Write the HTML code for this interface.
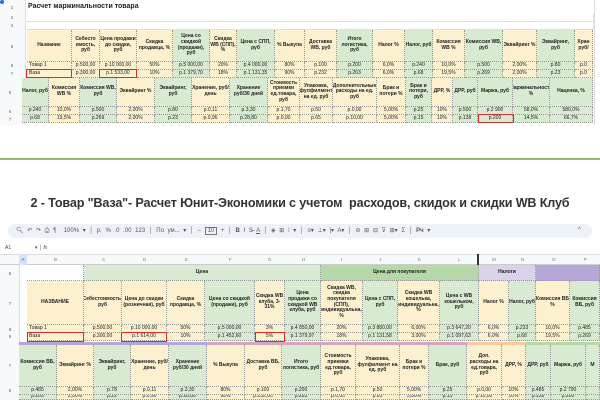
<!DOCTYPE html><html><head><meta charset="utf-8"><style>
body{margin:0;width:600px;height:400px;overflow:hidden;background:#fff;font-family:"Liberation Sans",Arial,sans-serif;position:relative}
.c{position:absolute;box-sizing:border-box;border-right:1px dotted #9a9a9a;border-bottom:1px dotted #9a9a9a;font-size:5px;line-height:5.6px;color:#222;display:flex;align-items:center;justify-content:center;text-align:center;overflow:hidden}
.h{font-weight:bold;font-size:5px}
.Y{background:#fdf0cf}.G{background:#d9ead3}.W{background:#fff}
.r{position:absolute;font-size:4.5px;color:#666;width:20px;text-align:center}
.rb{position:absolute;border:1.5px solid #d32f2f;box-sizing:border-box}
.t{position:absolute;white-space:nowrap}
.g{position:absolute;border-right:1px solid #e0e0e0;border-bottom:1px solid #e0e0e0;box-sizing:border-box}
</style></head><body>
<div style="position:absolute;left:0;top:0;width:594px;height:125px;background:#fff;border-right:1px solid #ddd"></div>
<div style="position:absolute;left:0;top:0;width:25px;height:125px;background:#f8f9fa;border-right:1px solid #ddd"></div>
<div style="position:absolute;left:0;top:0;width:4px;height:4px;border-radius:50%;background:#1a73e8"></div>
<div class="g" style="left:25px;top:13px;width:569px;height:9px"></div>
<div class="g" style="left:25px;top:22px;width:569px;height:8px"></div>
<div class="t" style="left:28px;top:3px;font-size:7px;font-weight:bold;color:#222">Расчет маржинальности товара</div>
<div class="r" style="left:2px;top:5px">2</div><div class="r" style="left:2px;top:15px">3</div><div class="r" style="left:2px;top:23px">4</div>
<div class="r" style="left:2px;top:44px">5</div><div class="r" style="left:2px;top:63px">6</div><div class="r" style="left:2px;top:71px">7</div>
<div class="r" style="left:0px;top:90px">8</div><div class="r" style="left:0px;top:109px">6</div><div class="r" style="left:0px;top:117px">7</div>

<div class="c h Y" style="left:27px;top:30px;width:45px;height:32px">Название</div>
<div class="c h Y" style="left:72px;top:30px;width:28px;height:32px">Себесто имость, руб</div>
<div class="c h Y" style="left:100px;top:30px;width:37px;height:32px">Цена продажи до скидки, руб</div>
<div class="c h Y" style="left:137px;top:30px;width:36px;height:32px">Скидка продавца, %</div>
<div class="c h G" style="left:173px;top:30px;width:37px;height:32px">Цена со скидкой (продажи), руб</div>
<div class="c h Y" style="left:210px;top:30px;width:27px;height:32px">Скидка WB (СПП), %</div>
<div class="c h G" style="left:237px;top:30px;width:38px;height:32px">Цена с СПП, руб</div>
<div class="c h Y" style="left:275px;top:30px;width:30px;height:32px">% Выкупа</div>
<div class="c h Y" style="left:305px;top:30px;width:32px;height:32px">Доставка WB, руб</div>
<div class="c h G" style="left:337px;top:30px;width:36px;height:32px">Итого логистика, руб</div>
<div class="c h Y" style="left:373px;top:30px;width:32px;height:32px">Налог %</div>
<div class="c h G" style="left:405px;top:30px;width:28px;height:32px">Налог, руб</div>
<div class="c h Y" style="left:433px;top:30px;width:32px;height:32px">Комиссия WB %</div>
<div class="c h G" style="left:465px;top:30px;width:38px;height:32px">Комиссия WB, руб</div>
<div class="c h Y" style="left:503px;top:30px;width:34px;height:32px">Эквайринг %</div>
<div class="c h G" style="left:537px;top:30px;width:38px;height:32px">Эквайринг, руб</div>
<div class="c h Y" style="left:575px;top:30px;width:18px;height:32px">Хран руб/</div>
<div class="c Y" style="left:27px;top:62px;width:45px;height:8px;justify-content:flex-start;padding-left:2px">Товар 1</div>
<div class="c Y" style="left:72px;top:62px;width:28px;height:8px">р.500,00</div>
<div class="c Y" style="left:100px;top:62px;width:37px;height:8px">р.10 000,00</div>
<div class="c Y" style="left:137px;top:62px;width:36px;height:8px">50%</div>
<div class="c G" style="left:173px;top:62px;width:37px;height:8px">р.5 000,00</div>
<div class="c Y" style="left:210px;top:62px;width:27px;height:8px">20%</div>
<div class="c G" style="left:237px;top:62px;width:38px;height:8px">р.4 000,00</div>
<div class="c Y" style="left:275px;top:62px;width:30px;height:8px">80%</div>
<div class="c Y" style="left:305px;top:62px;width:32px;height:8px">р.100</div>
<div class="c G" style="left:337px;top:62px;width:36px;height:8px">р.200</div>
<div class="c Y" style="left:373px;top:62px;width:32px;height:8px">6,0%</div>
<div class="c G" style="left:405px;top:62px;width:28px;height:8px">р.240</div>
<div class="c Y" style="left:433px;top:62px;width:32px;height:8px">10,0%</div>
<div class="c G" style="left:465px;top:62px;width:38px;height:8px">р.500</div>
<div class="c Y" style="left:503px;top:62px;width:34px;height:8px">2,00%</div>
<div class="c G" style="left:537px;top:62px;width:38px;height:8px">р.80</div>
<div class="c Y" style="left:575px;top:62px;width:18px;height:8px">р.0</div>
<div class="c Y" style="left:27px;top:70px;width:45px;height:8px;justify-content:flex-start;padding-left:2px">Ваза</div>
<div class="c Y" style="left:72px;top:70px;width:28px;height:8px">р.300,00</div>
<div class="c Y" style="left:100px;top:70px;width:37px;height:8px">р.1 533,00</div>
<div class="c Y" style="left:137px;top:70px;width:36px;height:8px">10%</div>
<div class="c G" style="left:173px;top:70px;width:37px;height:8px">р.1 379,70</div>
<div class="c Y" style="left:210px;top:70px;width:27px;height:8px">18%</div>
<div class="c G" style="left:237px;top:70px;width:38px;height:8px">р.1 131,35</div>
<div class="c Y" style="left:275px;top:70px;width:30px;height:8px">90%</div>
<div class="c Y" style="left:305px;top:70px;width:32px;height:8px">р.232</div>
<div class="c G" style="left:337px;top:70px;width:36px;height:8px">р.263</div>
<div class="c Y" style="left:373px;top:70px;width:32px;height:8px">6,0%</div>
<div class="c G" style="left:405px;top:70px;width:28px;height:8px">р.68</div>
<div class="c Y" style="left:433px;top:70px;width:32px;height:8px">19,5%</div>
<div class="c G" style="left:465px;top:70px;width:38px;height:8px">р.269</div>
<div class="c Y" style="left:503px;top:70px;width:34px;height:8px">2,00%</div>
<div class="c G" style="left:537px;top:70px;width:38px;height:8px">р.23</div>
<div class="c Y" style="left:575px;top:70px;width:18px;height:8px">р.0</div>
<div class="rb" style="left:26px;top:69px;width:46px;height:9px"></div>
<div class="rb" style="left:99px;top:69px;width:38px;height:9px"></div>

<div class="c h G" style="left:22px;top:78px;width:27px;height:29px">Налог, руб</div>
<div class="c h Y" style="left:49px;top:78px;width:31px;height:29px">Комиссия WB %</div>
<div class="c h G" style="left:80px;top:78px;width:37px;height:29px">Комиссия WB, руб</div>
<div class="c h Y" style="left:117px;top:78px;width:38px;height:29px">Эквайринг %</div>
<div class="c h G" style="left:155px;top:78px;width:37px;height:29px">Эквайринг, руб</div>
<div class="c h Y" style="left:192px;top:78px;width:38px;height:29px">Хранение, руб/день</div>
<div class="c h G" style="left:230px;top:78px;width:38px;height:29px">Хранение руб/30 дней</div>
<div class="c h Y" style="left:268px;top:78px;width:32px;height:29px">Стоимость приемки ед.товара, руб</div>
<div class="c h Y" style="left:300px;top:78px;width:33px;height:29px">Упаковка, фулфилмент на ед. руб</div>
<div class="c h Y" style="left:333px;top:78px;width:44px;height:29px">Дополнительные расходы на ед. руб</div>
<div class="c h Y" style="left:377px;top:78px;width:29px;height:29px">Брак и потери %</div>
<div class="c h G" style="left:406px;top:78px;width:26px;height:29px">Брак и потери, руб</div>
<div class="c h Y" style="left:432px;top:78px;width:21px;height:29px">ДРР, %</div>
<div class="c h G" style="left:453px;top:78px;width:25px;height:29px">ДРР, руб</div>
<div class="c h G" style="left:478px;top:78px;width:35px;height:29px">Маржа, руб</div>
<div class="c h G" style="left:513px;top:78px;width:37px;height:29px">Маржинальность %</div>
<div class="c h G" style="left:550px;top:78px;width:43px;height:29px">Наценка, %</div>
<div class="c G" style="left:22px;top:107px;width:27px;height:8px">р.240</div>
<div class="c Y" style="left:49px;top:107px;width:31px;height:8px">10,0%</div>
<div class="c G" style="left:80px;top:107px;width:37px;height:8px">р.500</div>
<div class="c Y" style="left:117px;top:107px;width:38px;height:8px">2,00%</div>
<div class="c G" style="left:155px;top:107px;width:37px;height:8px">р.80</div>
<div class="c Y" style="left:192px;top:107px;width:38px;height:8px">р.0,11</div>
<div class="c G" style="left:230px;top:107px;width:38px;height:8px">р.3,30</div>
<div class="c Y" style="left:268px;top:107px;width:32px;height:8px">р.1,70</div>
<div class="c Y" style="left:300px;top:107px;width:33px;height:8px">р.50</div>
<div class="c Y" style="left:333px;top:107px;width:44px;height:8px">р.0,00</div>
<div class="c Y" style="left:377px;top:107px;width:29px;height:8px">5,00%</div>
<div class="c G" style="left:406px;top:107px;width:26px;height:8px">р.25</div>
<div class="c Y" style="left:432px;top:107px;width:21px;height:8px">10%</div>
<div class="c G" style="left:453px;top:107px;width:25px;height:8px">р.500</div>
<div class="c G" style="left:478px;top:107px;width:35px;height:8px">р.2 900</div>
<div class="c G" style="left:513px;top:107px;width:37px;height:8px">58,0%</div>
<div class="c G" style="left:550px;top:107px;width:43px;height:8px">580,0%</div>
<div class="c G" style="left:22px;top:115px;width:27px;height:8px">р.68</div>
<div class="c Y" style="left:49px;top:115px;width:31px;height:8px">19,5%</div>
<div class="c G" style="left:80px;top:115px;width:37px;height:8px">р.269</div>
<div class="c Y" style="left:117px;top:115px;width:38px;height:8px">2,00%</div>
<div class="c G" style="left:155px;top:115px;width:37px;height:8px">р.23</div>
<div class="c Y" style="left:192px;top:115px;width:38px;height:8px">р.0,96</div>
<div class="c G" style="left:230px;top:115px;width:38px;height:8px">р.28,80</div>
<div class="c Y" style="left:268px;top:115px;width:32px;height:8px">р.0,00</div>
<div class="c Y" style="left:300px;top:115px;width:33px;height:8px">р.65</div>
<div class="c Y" style="left:333px;top:115px;width:44px;height:8px">р.10,00</div>
<div class="c Y" style="left:377px;top:115px;width:29px;height:8px">5,00%</div>
<div class="c G" style="left:406px;top:115px;width:26px;height:8px">р.15</div>
<div class="c Y" style="left:432px;top:115px;width:21px;height:8px">10%</div>
<div class="c G" style="left:453px;top:115px;width:25px;height:8px">р.138</div>
<div class="c G" style="left:478px;top:115px;width:35px;height:8px">р.200</div>
<div class="c G" style="left:513px;top:115px;width:37px;height:8px">14,5%</div>
<div class="c G" style="left:550px;top:115px;width:43px;height:8px">66,7%</div>
<div class="rb" style="left:478px;top:114px;width:36px;height:9px"></div>

<div style="position:absolute;left:0;top:158px;width:600px;height:2px;background:#8fb873"></div>
<div class="t" style="left:0;width:600px;text-align:center;top:196px;font-size:12.6px;letter-spacing:-0.15px;font-weight:bold;color:#333">2 - Товар "Ваза"- Расчет Юнит-Экономики с учетом&nbsp; расходов, скидок и скидки WB Клуб</div>

<div style="position:absolute;left:8px;top:224px;width:584px;height:14px;border-radius:7px;background:#edf2fa"></div>
<div class="t" style="left:16px;top:227px;font-size:6px;color:#555;word-spacing:2px">🔍︎ ↶ ↷ ⎙ ¶ &nbsp;100% ▾ │ р. % .0 .00 123 │ По ум... ▾ │ − <span style="border:1px solid #777;padding:0 2px">10</span> + │ <b>B</b> <i>I</i> S̶ <u>A</u> │ ◈ ⊞ ⁞ ▾ │ ≡▾ ⊥▾ |▾ A▾ │ ⊖ ⊞ ⊟ ⊽ ⊞▾ Σ │ <b>Рч</b> ▾</div>
<div class="t" style="left:578px;top:227px;font-size:6px;color:#555">^</div>
<div class="t" style="left:5px;top:245px;font-size:5px;color:#444">A1</div>
<div class="t" style="left:35px;top:245px;font-size:5px;color:#444">▾ │ <i>fx</i></div>
<div style="position:absolute;left:0;top:254px;width:600px;height:11px;background:#f8f9fa;border-top:1px solid #ddd;border-bottom:1px solid #ccc;box-sizing:border-box"></div>
<div style="position:absolute;left:19px;top:254px;width:8px;height:11px;background:#d3e3fd;font-size:4.5px;color:#0b57d0;text-align:center;line-height:11px">A</div>
<div class="t" style="left:0;top:257px;font-size:4.5px;color:#777">
<span style="position:absolute;left:54px">B</span><span style="position:absolute;left:102px">C</span><span style="position:absolute;left:143px">D</span><span style="position:absolute;left:185px">E</span><span style="position:absolute;left:229px">F</span><span style="position:absolute;left:268px">G</span><span style="position:absolute;left:302px">H</span><span style="position:absolute;left:341px">I</span><span style="position:absolute;left:379px">J</span><span style="position:absolute;left:418px">K</span><span style="position:absolute;left:458px">L</span><span style="position:absolute;left:492px">M</span><span style="position:absolute;left:521px">N</span><span style="position:absolute;left:552px">O</span><span style="position:absolute;left:584px">P</span></div>
<div style="position:absolute;left:477px;top:254px;width:2px;height:11px;background:#333"></div>
<div style="position:absolute;left:0;top:265px;width:19px;height:135px;background:#f8f9fa;border-right:1px solid #ddd"></div>
<div class="r" style="left:0;top:271px">6</div><div class="r" style="left:0;top:301px">7</div><div class="r" style="left:0;top:327px">8</div><div class="r" style="left:0;top:334px">9</div><div class="r" style="left:0;top:363px">7</div><div class="r" style="left:0;top:388px">8</div>

<div class="c W" style="left:27px;top:265px;width:57px;height:16px"></div>
<div class="c h" style="left:84px;top:265px;width:237px;height:16px;background:#d9ead3">Цена</div>
<div class="c h" style="left:321px;top:265px;width:158px;height:16px;background:#b6d7a8">Цена для покупателя</div>
<div class="c h" style="left:479px;top:265px;width:57px;height:16px;background:#d9d2e9">Налоги</div>
<div class="c h" style="left:536px;top:265px;width:64px;height:16px;background:#b4a7d6"></div>
<div class="c h Y" style="left:27px;top:281px;width:57px;height:44px">НАЗВАНИЕ</div>
<div class="c h Y" style="left:84px;top:281px;width:38px;height:44px">Себестоимость, руб</div>
<div class="c h Y" style="left:122px;top:281px;width:45px;height:44px">Цена до скидки (розничная), руб</div>
<div class="c h Y" style="left:167px;top:281px;width:38px;height:44px">Скидка продавца, %</div>
<div class="c h G" style="left:205px;top:281px;width:50px;height:44px">Цена со скидкой (продажи), руб</div>
<div class="c h Y" style="left:255px;top:281px;width:30px;height:44px">Скидка WB клуба, 3-31%</div>
<div class="c h G" style="left:285px;top:281px;width:36px;height:44px">Цена продажи со скидкой WB клуба, руб</div>
<div class="c h Y" style="left:321px;top:281px;width:42px;height:44px">Скидка WB, скидка покупателя (СПП), индивидуальна, %</div>
<div class="c h G" style="left:363px;top:281px;width:35px;height:44px">Цена с СПП, руб</div>
<div class="c h Y" style="left:398px;top:281px;width:42px;height:44px">Скидка WB кошелька, индивидуальна, %</div>
<div class="c h G" style="left:440px;top:281px;width:39px;height:44px">Цена с WB кошельком, руб</div>
<div class="c h Y" style="left:479px;top:281px;width:30px;height:44px">Налог %</div>
<div class="c h G" style="left:509px;top:281px;width:27px;height:44px">Налог, руб</div>
<div class="c h Y" style="left:536px;top:281px;width:34px;height:44px">Комиссия ВБ %</div>
<div class="c h G" style="left:570px;top:281px;width:30px;height:44px">Комиссия ВБ, руб</div>
<div class="c Y" style="left:27px;top:325px;width:57px;height:8px;justify-content:flex-start;padding-left:2px">Товар 1</div>
<div class="c Y" style="left:84px;top:325px;width:38px;height:8px">р.500,00</div>
<div class="c Y" style="left:122px;top:325px;width:45px;height:8px">р.10 000,00</div>
<div class="c Y" style="left:167px;top:325px;width:38px;height:8px">50%</div>
<div class="c G" style="left:205px;top:325px;width:50px;height:8px">р.5 000,00</div>
<div class="c Y" style="left:255px;top:325px;width:30px;height:8px">3%</div>
<div class="c G" style="left:285px;top:325px;width:36px;height:8px">р.4 850,00</div>
<div class="c Y" style="left:321px;top:325px;width:42px;height:8px">20%</div>
<div class="c G" style="left:363px;top:325px;width:35px;height:8px">р.3 880,00</div>
<div class="c Y" style="left:398px;top:325px;width:42px;height:8px">6,00%</div>
<div class="c G" style="left:440px;top:325px;width:39px;height:8px">р.3 647,20</div>
<div class="c Y" style="left:479px;top:325px;width:30px;height:8px">6,0%</div>
<div class="c G" style="left:509px;top:325px;width:27px;height:8px">р.233</div>
<div class="c Y" style="left:536px;top:325px;width:34px;height:8px">10,0%</div>
<div class="c G" style="left:570px;top:325px;width:30px;height:8px">р.485</div>
<div class="c Y" style="left:27px;top:333px;width:57px;height:8px;justify-content:flex-start;padding-left:2px">Ваза</div>
<div class="c Y" style="left:84px;top:333px;width:38px;height:8px">р.300,00</div>
<div class="c Y" style="left:122px;top:333px;width:45px;height:8px">р.1 614,00</div>
<div class="c Y" style="left:167px;top:333px;width:38px;height:8px">10%</div>
<div class="c G" style="left:205px;top:333px;width:50px;height:8px">р.1 452,60</div>
<div class="c Y" style="left:255px;top:333px;width:30px;height:8px">5%</div>
<div class="c G" style="left:285px;top:333px;width:36px;height:8px">р.1 379,97</div>
<div class="c Y" style="left:321px;top:333px;width:42px;height:8px">18%</div>
<div class="c G" style="left:363px;top:333px;width:35px;height:8px">р.1 131,58</div>
<div class="c Y" style="left:398px;top:333px;width:42px;height:8px">3,00%</div>
<div class="c G" style="left:440px;top:333px;width:39px;height:8px">р.1 097,63</div>
<div class="c Y" style="left:479px;top:333px;width:30px;height:8px">6,0%</div>
<div class="c G" style="left:509px;top:333px;width:27px;height:8px">р.68</div>
<div class="c Y" style="left:536px;top:333px;width:34px;height:8px">19,5%</div>
<div class="c G" style="left:570px;top:333px;width:30px;height:8px">р.269</div>
<div class="rb" style="left:27px;top:332px;width:57px;height:10px"></div>
<div class="rb" style="left:121px;top:332px;width:46px;height:10px"></div>
<div class="rb" style="left:255px;top:332px;width:30px;height:10px"></div>

<div style="position:absolute;left:19px;top:342px;width:188px;height:3px;background:#b4a7d6"></div>
<div style="position:absolute;left:207px;top:342px;width:260px;height:3px;background:#d5a6bd"></div>
<div style="position:absolute;left:467px;top:342px;width:59px;height:3px;background:#f9cb9c"></div>
<div style="position:absolute;left:526px;top:342px;width:74px;height:3px;background:#b6d7a8"></div>
<div class="c h G" style="left:19px;top:345px;width:38px;height:42px">Комиссия ВБ, руб</div>
<div class="c h Y" style="left:57px;top:345px;width:37px;height:42px">Эквайринг %</div>
<div class="c h G" style="left:94px;top:345px;width:37px;height:42px">Эквайринг, руб</div>
<div class="c h Y" style="left:131px;top:345px;width:38px;height:42px">Хранение, руб/день</div>
<div class="c h G" style="left:169px;top:345px;width:38px;height:42px">Хранение руб/30 дней</div>
<div class="c h Y" style="left:207px;top:345px;width:38px;height:42px">% Выкупа</div>
<div class="c h Y" style="left:245px;top:345px;width:37px;height:42px">Доставка ВБ, руб</div>
<div class="c h G" style="left:282px;top:345px;width:39px;height:42px">Итого логистика, руб</div>
<div class="c h Y" style="left:321px;top:345px;width:35px;height:42px">Стоимость приемки ед.товара, руб</div>
<div class="c h Y" style="left:356px;top:345px;width:44px;height:42px">Упаковка, фулфилмент на ед. руб</div>
<div class="c h Y" style="left:400px;top:345px;width:29px;height:42px">Брак и потери %</div>
<div class="c h G" style="left:429px;top:345px;width:38px;height:42px">Брак, руб</div>
<div class="c h Y" style="left:467px;top:345px;width:35px;height:42px">Доп. расходы на ед.товара, руб</div>
<div class="c h Y" style="left:502px;top:345px;width:24px;height:42px">ДРР, %</div>
<div class="c h G" style="left:526px;top:345px;width:25px;height:42px">ДРР, руб</div>
<div class="c h G" style="left:551px;top:345px;width:35px;height:42px">Маржа, руб</div>
<div class="c h G" style="left:586px;top:345px;width:14px;height:42px">М</div>
<div class="c G" style="left:19px;top:387px;width:38px;height:8px">р.485</div>
<div class="c Y" style="left:57px;top:387px;width:37px;height:8px">2,00%</div>
<div class="c G" style="left:94px;top:387px;width:37px;height:8px">р.78</div>
<div class="c Y" style="left:131px;top:387px;width:38px;height:8px">р.0,11</div>
<div class="c G" style="left:169px;top:387px;width:38px;height:8px">р.3,30</div>
<div class="c Y" style="left:207px;top:387px;width:38px;height:8px">80%</div>
<div class="c Y" style="left:245px;top:387px;width:37px;height:8px">р.100</div>
<div class="c G" style="left:282px;top:387px;width:39px;height:8px">р.200</div>
<div class="c Y" style="left:321px;top:387px;width:35px;height:8px">р.1,70</div>
<div class="c Y" style="left:356px;top:387px;width:44px;height:8px">р.50</div>
<div class="c Y" style="left:400px;top:387px;width:29px;height:8px">5,00%</div>
<div class="c G" style="left:429px;top:387px;width:38px;height:8px">р.25</div>
<div class="c Y" style="left:467px;top:387px;width:35px;height:8px">р.0,00</div>
<div class="c Y" style="left:502px;top:387px;width:24px;height:8px">10%</div>
<div class="c G" style="left:526px;top:387px;width:25px;height:8px">р.485</div>
<div class="c G" style="left:551px;top:387px;width:35px;height:8px">р.2 790</div>
<div class="c G" style="left:586px;top:387px;width:14px;height:8px"></div>
<div class="c G" style="left:19px;top:395px;width:38px;height:5px">р.269</div>
<div class="c Y" style="left:57px;top:395px;width:37px;height:5px">2,00%</div>
<div class="c G" style="left:94px;top:395px;width:37px;height:5px">р.22</div>
<div class="c Y" style="left:131px;top:395px;width:38px;height:5px">р.0,96</div>
<div class="c G" style="left:169px;top:395px;width:38px;height:5px">р.28,80</div>
<div class="c Y" style="left:207px;top:395px;width:38px;height:5px">90%</div>
<div class="c Y" style="left:245px;top:395px;width:37px;height:5px">р.232,00</div>
<div class="c G" style="left:282px;top:395px;width:39px;height:5px">р.263</div>
<div class="c Y" style="left:321px;top:395px;width:35px;height:5px">р.0,00</div>
<div class="c Y" style="left:356px;top:395px;width:44px;height:5px">р.65</div>
<div class="c Y" style="left:400px;top:395px;width:29px;height:5px">5,00%</div>
<div class="c G" style="left:429px;top:395px;width:38px;height:5px">р.15</div>
<div class="c Y" style="left:467px;top:395px;width:35px;height:5px">р.10,00</div>
<div class="c Y" style="left:502px;top:395px;width:24px;height:5px">10%</div>
<div class="c G" style="left:526px;top:395px;width:25px;height:5px">р.138</div>
<div class="c G" style="left:551px;top:395px;width:35px;height:5px">р.200</div>
<div class="c G" style="left:586px;top:395px;width:14px;height:5px"></div>
</body></html>
